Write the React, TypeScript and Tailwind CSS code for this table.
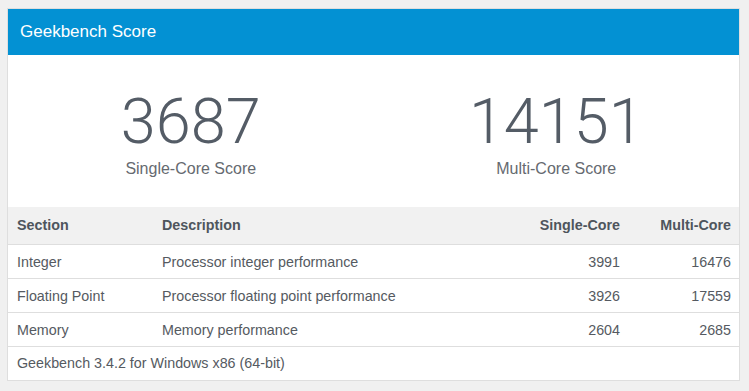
import React from "react";

const rows = [
  { s: "Integer", d: "Processor integer performance", a: "3991", b: "16476" },
  { s: "Floating Point", d: "Processor floating point performance", a: "3926", b: "17559" },
  { s: "Memory", d: "Memory performance", a: "2604", b: "2685" },
];

export default function App() {
  return (
    <div
      className="min-h-[391px] w-full bg-[#f0f0f0] pt-2 pl-[7px] pr-[9px]"
      style={{ fontFamily: '"Liberation Sans", Arial, sans-serif' }}
    >
      <div className="border border-[#dedede] bg-white">
        <div className="flex h-[46px] items-center bg-[#0391d3] pl-3 text-[17px] text-white">
          Geekbench Score
        </div>
        <div className="grid h-[152px] grid-cols-2 text-center">
          <div className="flex flex-col items-center pt-[36px]">
            <div
              className="text-[63px] font-light leading-[62px] text-[#545c66]"
              style={{ fontFamily: 'Roboto, "Liberation Sans", sans-serif' }}
            >
              3687
            </div>
            <div className="mt-[6px] text-[16px] leading-[20px] text-[#666a70]">Single-Core Score</div>
          </div>
          <div className="flex flex-col items-center pt-[36px]">
            <div
              className="text-[63px] font-light leading-[62px] text-[#545c66]"
              style={{ fontFamily: 'Roboto, "Liberation Sans", sans-serif' }}
            >
              14151
            </div>
            <div className="mt-[6px] text-[16px] leading-[20px] text-[#666a70]">Multi-Core Score</div>
          </div>
        </div>
        <div className="grid h-[38px] grid-cols-[146px_1fr_120px_111px] items-center border-b border-[#dedede] bg-[#f1f1f1] text-[14.3px] font-bold text-[#4e555d]">
          <div className="pl-[9px]">Section</div>
          <div className="pl-2">Description</div>
          <div className="pr-2 text-right">Single-Core</div>
          <div className="pr-2 text-right">Multi-Core</div>
        </div>
        {rows.map((r) => (
          <div
            key={r.s}
            className="grid h-[34px] grid-cols-[146px_1fr_120px_111px] items-center border-b border-[#dedede] pt-[2px] text-[14.3px] text-[#555a61]"
          >
            <div className="pl-[9px]">{r.s}</div>
            <div className="pl-2">{r.d}</div>
            <div className="pr-2 text-right">{r.a}</div>
            <div className="pr-2 text-right">{r.b}</div>
          </div>
        ))}
        <div className="flex h-[33px] items-center pl-[9px] text-[14.3px] text-[#555a61]">
          Geekbench 3.4.2 for Windows x86 (64-bit)
        </div>
      </div>
    </div>
  );
}
